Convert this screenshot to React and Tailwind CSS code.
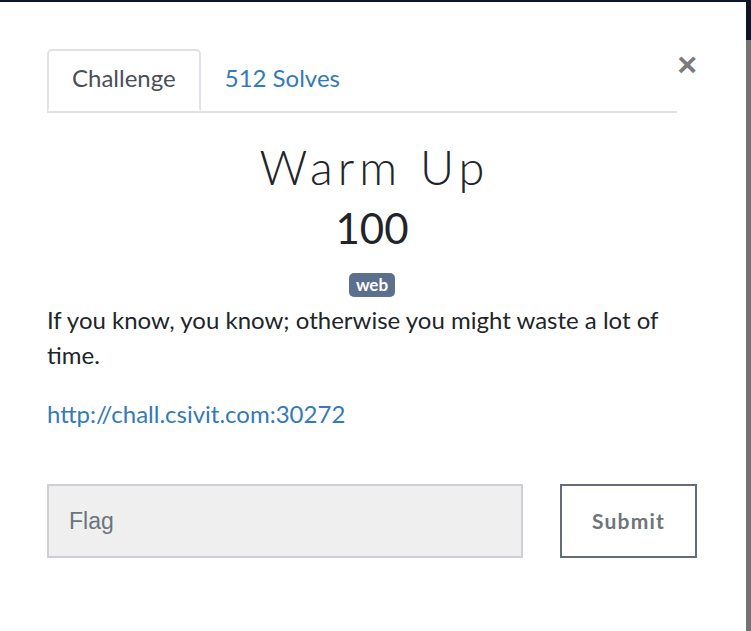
import React from "react";

const App = () => {
  return (
    <div className="w-[751px] h-[631px] flex bg-[#0b1628] overflow-hidden font-['Lato','Noto_Sans',sans-serif]">
      {/* Modal */}
      <div className="w-[746px] h-[629px] mt-[2px] bg-white pl-[47px] pr-[49px] pt-[47px] text-[#212529]">
        {/* Tabs + close */}
        <div className="flex items-start">
          <div className="flex w-[630px] border-b-2 border-[#dee2e6]">
            <div className="-mb-[2px] h-[62px] px-[23px] pb-[4px] flex items-center border-2 border-[#dee2e6] border-b-white rounded-t-[5px] text-[24px] text-[#495057]">
              Challenge
            </div>
            <div className="h-[62px] px-[24px] pb-[4px] flex items-center text-[24px] text-[#337ab7]">
              512 Solves
            </div>
          </div>
          <button className="ml-auto -mt-[2px] text-[34px] leading-none font-bold text-[#7b7b7b] font-['Liberation_Sans',sans-serif]">
            ×
          </button>
        </div>

        {/* Title */}
        <div className="flex flex-col items-center mt-[27px]">
          <h1 className="text-[47px] leading-[54px] font-light tracking-[5px] pl-[5px] text-[#212529]">Warm Up</h1>
          <h2 className="text-[42px] leading-[50px] mt-[9px] text-[#212529]">100</h2>
          <span className="mt-[20px] h-[24px] px-[7px] flex items-center rounded-[5px] bg-[#5b6f8e] text-white text-[17px] font-bold">
            web
          </span>
        </div>

        {/* Description */}
        <div className="mt-[5px] text-[24px] leading-[35px] text-[#212529]">
          <p>If you know, you know; otherwise you might waste a lot of time.</p>
          <p className="mt-[24px]">
            <a href="#" className="text-[#337ab7]">http://chall.csivit.com:30272</a>
          </p>
        </div>

        {/* Flag form */}
        <div className="flex items-start mt-[53px]">
          <input
            type="text"
            placeholder="Flag"
            className="w-[476px] h-[74px] bg-[#efefef] border-2 border-[#ccd0d5] px-[20px] text-[23px] font-['Liberation_Sans',sans-serif] placeholder:text-[#6c757d] outline-none"
          />
          <button className="ml-auto w-[137px] h-[74px] border-2 border-[#646d77] text-[21px] font-bold tracking-[1.2px] text-[#6c757d]">
            Submit
          </button>
        </div>
      </div>

      {/* Scrollbar strip */}
      <div className="flex-1 flex flex-col">
        <div className="h-[40px] bg-[#0b1628]"></div>
        <div className="flex-1 bg-[#737373]"></div>
      </div>
    </div>
  );
};

export default App;
